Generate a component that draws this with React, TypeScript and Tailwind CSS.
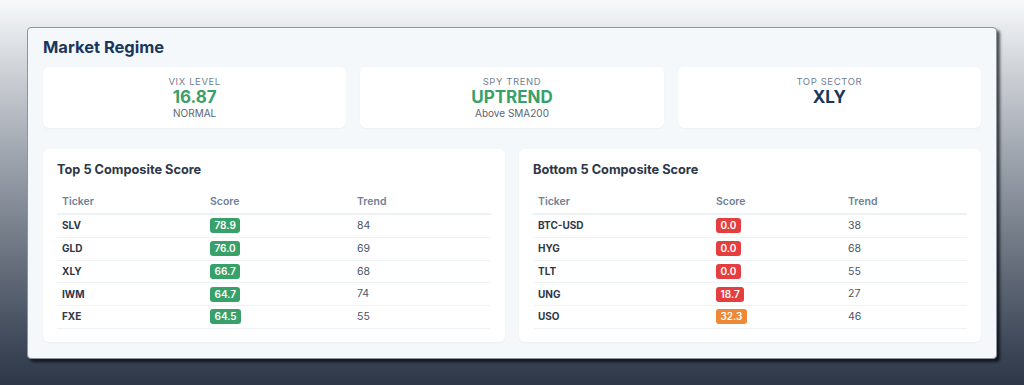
type Row = { ticker: string; score: number; trend: number };

const top5: Row[] = [
  { ticker: "SLV", score: 78.9, trend: 84 },
  { ticker: "GLD", score: 76.0, trend: 69 },
  { ticker: "XLY", score: 66.7, trend: 68 },
  { ticker: "IWM", score: 64.7, trend: 74 },
  { ticker: "FXE", score: 64.5, trend: 55 },
];

const bottom5: Row[] = [
  { ticker: "BTC-USD", score: 0.0, trend: 38 },
  { ticker: "HYG", score: 0.0, trend: 68 },
  { ticker: "TLT", score: 0.0, trend: 55 },
  { ticker: "UNG", score: 18.7, trend: 27 },
  { ticker: "USO", score: 32.3, trend: 46 },
];

const badgeColor = (score: number) => {
  if (score >= 60) return "bg-[#38a169]";
  if (score >= 30) return "bg-[#ed8936]";
  return "bg-[#e53e3e]";
};

const StatCard = ({
  label,
  value,
  sub,
  valueClass,
}: {
  label: string;
  value: string;
  sub?: string;
  valueClass: string;
}) => (
  <div className="flex flex-col items-center rounded-md bg-white pt-2 pb-2 shadow-[0_1px_2px_rgba(0,0,0,0.04)]">
    <span className="text-[9.5px] leading-[13px] tracking-[0.6px] text-[#718096] uppercase">{label}</span>
    <span className={`text-[17px] leading-[18px] font-bold ${valueClass}`}>{value}</span>
    {sub && <span className="text-[10px] leading-[14px] text-[#5a6578]">{sub}</span>}
  </div>
);

const ScoreTable = ({ title, rows, cols }: { title: string; rows: Row[]; cols: string }) => (
  <div className="rounded-md bg-white px-[14px] pt-[11px] pb-[13px] shadow-[0_1px_2px_rgba(0,0,0,0.04)]">
    <h3 className="text-[12.75px] leading-[20px] font-bold text-[#2d3748]">{title}</h3>
    <div className="mt-[11px]">
      <div className={`grid ${cols} border-b-2 border-[#edf2f7] pt-[4px] pb-[4px] text-[10.5px] leading-[14px] font-semibold text-[#718096]`}>
        <span className="px-[5px]">Ticker</span>
        <span className="px-[5px]">Score</span>
        <span className="px-[5px]">Trend</span>
      </div>
      {rows.map((r) => (
        <div
          key={r.ticker}
          className={`grid ${cols} h-[22.75px] items-center border-b border-[#edf2f7]`}
        >
          <span className="px-[5px] text-[10px] font-bold text-[#2d3748]">{r.ticker}</span>
          <span className="flex items-center px-[5px]">
            <span
              className={`flex h-[15px] items-center rounded-[3px] px-[4.5px] text-[10px] font-semibold text-white ${badgeColor(r.score)}`}
            >
              {r.score.toFixed(1)}
            </span>
          </span>
          <span className="px-[5px] text-[10.5px] text-[#4a5568]">{r.trend}</span>
        </div>
      ))}
    </div>
  </div>
);

export default function App() {
  return (
    <div className="h-[385px] w-full bg-gradient-to-b from-[#f7f9fb] to-[#2d3748] px-[27px] pt-[27px] font-['Inter',sans-serif]">
      <div className="rounded-[4px] border border-[#8a94a3] bg-[#f5f8fb] px-[15px] pt-[7px] pb-[16px] shadow-[3px_3px_3px_rgba(0,0,0,0.65)]">
        <h2 className="text-[16.5px] leading-[24px] font-bold text-[#1a365d]">Market Regime</h2>
        <div className="mt-2 grid grid-cols-3 gap-[14px]">
          <StatCard label="VIX Level" value="16.87" sub="NORMAL" valueClass="text-[#38a169]" />
          <StatCard label="SPY Trend" value="UPTREND" sub="Above SMA200" valueClass="text-[#38a169]" />
          <StatCard label="Top Sector" value="XLY" valueClass="text-[#1a365d]" />
        </div>
        <div className="mt-[21px] grid grid-cols-2 gap-[14px]">
          <ScoreTable title="Top 5 Composite Score" rows={top5} cols="grid-cols-[148px_147px_1fr]" />
          <ScoreTable title="Bottom 5 Composite Score" rows={bottom5} cols="grid-cols-[178px_132px_1fr]" />
        </div>
      </div>
    </div>
  );
}
